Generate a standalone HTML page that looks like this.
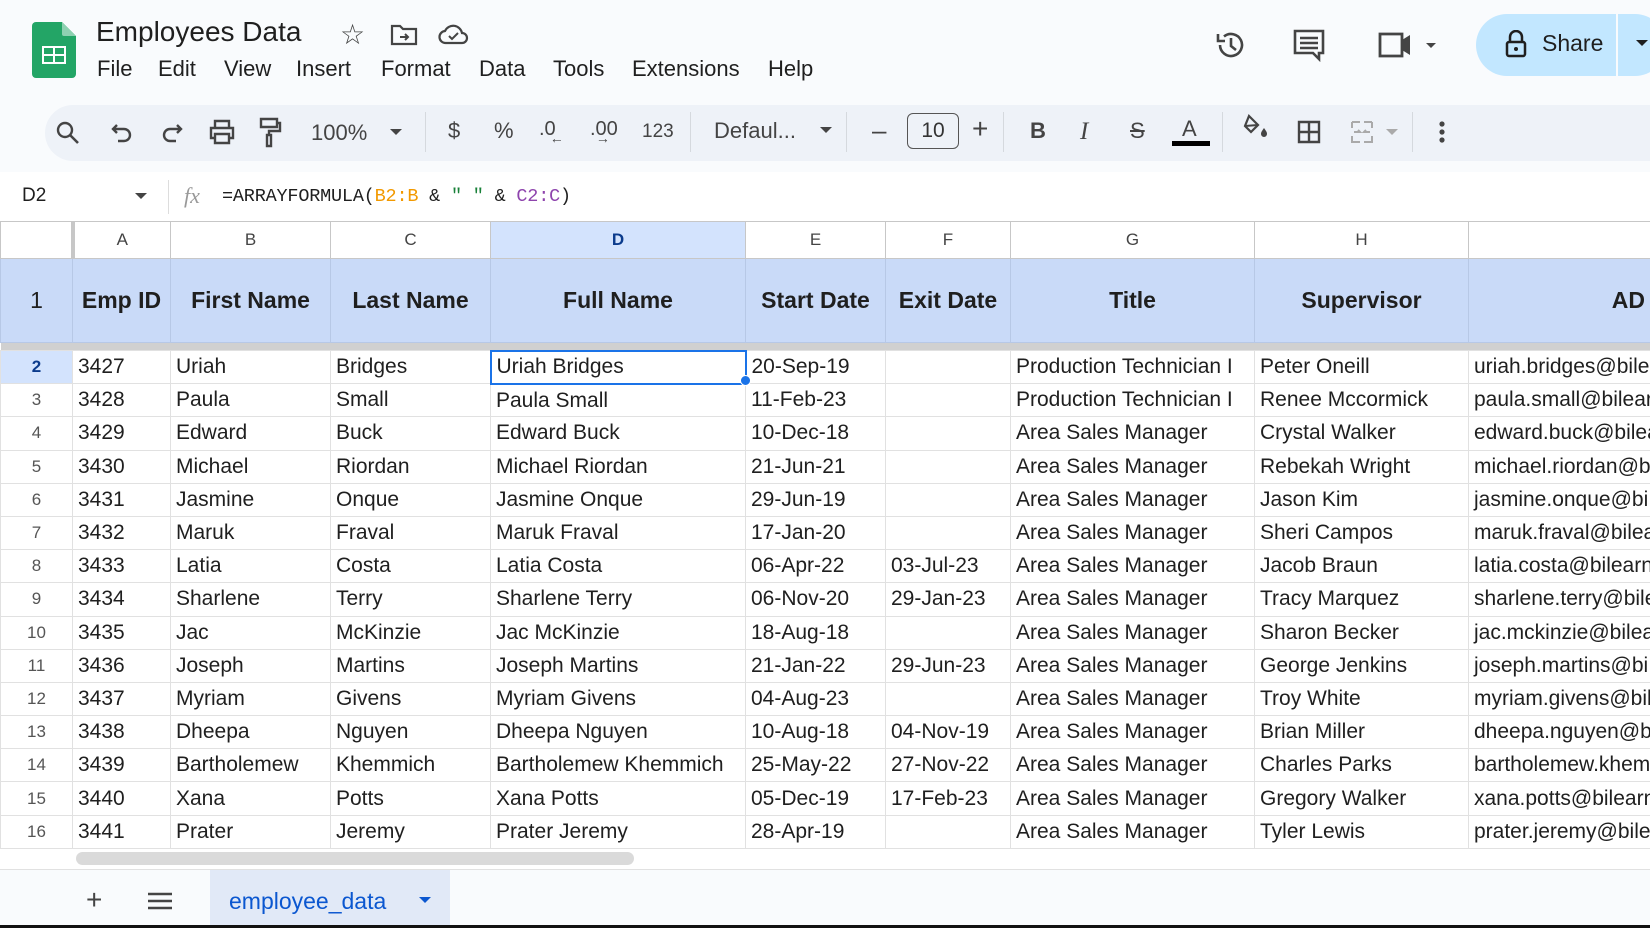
<!DOCTYPE html>
<html><head><meta charset="utf-8"><style>
*{box-sizing:border-box;margin:0;padding:0}
body{width:1650px;height:928px;overflow:hidden;background:#f9fbfd;font-family:"Liberation Sans",Arial,sans-serif;color:#1f1f1f;position:relative}
.abs{position:absolute}
.title{left:96px;top:16px;font-size:28px;color:#1f1f1f}
.menu{top:56px;font-size:22px;color:#1f1f1f}
.tb{left:45px;top:105px;width:1700px;height:56px;background:#eef2f8;border-radius:28px}
.ti{position:absolute;top:118px;font-size:22px;color:#444}
svg.i{position:absolute}
table{position:absolute;left:0;top:221px;width:1650px;border-collapse:collapse;table-layout:fixed;background:#fff}
td{border:1px solid #e1e1e1;font-size:21px;white-space:nowrap;overflow:hidden;padding:0 5px;height:33.2px;color:#1f1f1f}
tr.ch td{height:37px;text-align:center;font-size:17px;color:#444;background:#fff;border-color:#c7c7c7}
tr.h td{height:84px;background:#c9daf8;font-weight:bold;font-size:23px;text-align:center;color:#1f1f1f;border-color:#b7c8e6}
tr.s td{height:8px;background:#d0d0d0;border:none;padding:0}
td.rn{text-align:center;font-size:17px;color:#555;background:#fff;padding:0}
</style></head><body>
<svg class="i" style="left:32px;top:22px" width="44" height="56" viewBox="0 0 44 56"><path d="M4 0h26l14 14v38a4 4 0 0 1-4 4H4a4 4 0 0 1-4-4V4a4 4 0 0 1 4-4z" fill="#23a566"/><path d="M30 0l14 14H32a2 2 0 0 1-2-2z" fill="#8ed1b1"/><rect x="10" y="24" width="24" height="18" fill="#fff"/><rect x="12" y="26" width="9" height="6" fill="#23a566"/><rect x="23" y="26" width="9" height="6" fill="#23a566"/><rect x="12" y="34" width="9" height="6" fill="#23a566"/><rect x="23" y="34" width="9" height="6" fill="#23a566"/></svg>
<div class="abs title">Employees Data</div>
<div class="abs" style="left:340px;top:18px;font-size:28px;color:#444">☆</div>
<svg class="i" style="left:390px;top:24px" width="28" height="22" viewBox="0 0 28 22"><path d="M2 2h8l3 3h13v15H2z" fill="none" stroke="#444" stroke-width="2.2"/><path d="M10 13h8m-3-3l3 3-3 3" fill="none" stroke="#444" stroke-width="2"/></svg>
<svg class="i" style="left:438px;top:22px" width="32" height="24" viewBox="0 0 32 24"><path d="M8 21a6 6 0 0 1-1-12 9 9 0 0 1 17 2 5 5 0 0 1 0 10z" fill="none" stroke="#444" stroke-width="2.2"/><path d="M11 14l3 3 6-6" fill="none" stroke="#444" stroke-width="2"/></svg>
<div class="abs menu" style="left:97px">File</div><div class="abs menu" style="left:158px">Edit</div><div class="abs menu" style="left:224px">View</div><div class="abs menu" style="left:296px">Insert</div><div class="abs menu" style="left:381px">Format</div><div class="abs menu" style="left:479px">Data</div><div class="abs menu" style="left:553px">Tools</div><div class="abs menu" style="left:632px">Extensions</div><div class="abs menu" style="left:768px">Help</div>
<svg class="i" style="left:1214px;top:28px" width="34" height="34" viewBox="0 0 34 34"><path d="M6 17a11 11 0 1 0 4-8.5" fill="none" stroke="#444" stroke-width="2.6"/><path d="M4 6v7h7" fill="none" stroke="#444" stroke-width="2.6"/><path d="M17 10v8l5 4" fill="none" stroke="#444" stroke-width="2.6"/></svg>
<svg class="i" style="left:1292px;top:28px" width="34" height="34" viewBox="0 0 34 34"><path d="M3 3h28v22h-4v6l-6-6H3z" fill="none" stroke="#444" stroke-width="2.6"/><path d="M8 10h18M8 15h18M8 20h18" stroke="#444" stroke-width="2.4"/></svg>
<svg class="i" style="left:1376px;top:30px" width="60" height="30" viewBox="0 0 60 30"><path d="M4 4h22v22H4z" fill="none" stroke="#444" stroke-width="2.8"/><path d="M26 10l8-5v20l-8-5z" fill="#444"/><path d="M50 13h10l-5 5z" fill="#444"/></svg>
<div class="abs" style="left:1476px;top:14px;width:190px;height:62px;background:#c2e7ff;border-radius:31px"></div>
<div class="abs" style="left:1616px;top:14px;width:2px;height:62px;background:#f9fbfd"></div>
<svg class="i" style="left:1505px;top:30px" width="22" height="28" viewBox="0 0 22 28"><path d="M5 12V7a6 6 0 0 1 12 0v5" fill="none" stroke="#1f1f1f" stroke-width="2.5"/><rect x="2" y="12" width="18" height="14" rx="2" fill="none" stroke="#1f1f1f" stroke-width="2.5"/><circle cx="11" cy="19" r="2" fill="#1f1f1f"/></svg>
<div class="abs" style="left:1542px;top:30px;font-size:23px;color:#1f1f1f">Share</div>
<svg class="i" style="left:1636px;top:40px" width="12" height="8"><path d="M0 0h12L6 6z" fill="#1f1f1f"/></svg>
<div class="abs tb"></div>
<svg class="i" style="left:55px;top:120px" width="26" height="26" viewBox="0 0 26 26"><circle cx="10" cy="10" r="7" fill="none" stroke="#444" stroke-width="2.4"/><path d="M15 15l8 8" stroke="#444" stroke-width="2.6"/></svg>
<svg class="i" style="left:110px;top:122px" width="24" height="22" viewBox="0 0 24 22"><path d="M7 3L3 7l4 4M3 7h11a6 6 0 0 1 0 12H8" fill="none" stroke="#444" stroke-width="2.4"/></svg>
<svg class="i" style="left:160px;top:122px" width="24" height="22" viewBox="0 0 24 22"><path d="M17 3l4 4-4 4M21 7H10a6 6 0 0 0 0 12h6" fill="none" stroke="#444" stroke-width="2.4"/></svg>
<svg class="i" style="left:208px;top:118px" width="28" height="28" viewBox="0 0 28 28"><path d="M7 9V3h14v6M7 20H3V10h22v10h-4M7 16h14v9H7z" fill="none" stroke="#444" stroke-width="2.4"/></svg>
<svg class="i" style="left:258px;top:116px" width="24" height="32" viewBox="0 0 24 32"><path d="M3 3h16v8H3zM19 7h3v8H11v4M9 19h4v11H9z" fill="none" stroke="#444" stroke-width="2.4"/></svg>
<div class="ti" style="left:311px;top:120px">100%</div>
<svg class="i" style="left:390px;top:129px" width="12" height="8"><path d="M0 0h12L6 6z" fill="#444"/></svg>
<div class="abs" style="left:425px;top:112px;width:1px;height:40px;background:#d5d9de"></div>
<div class="ti" style="left:448px">$</div>
<div class="ti" style="left:494px">%</div>
<div class="ti" style="left:539px;font-size:20px">.0<span style="font-size:14px;position:relative;top:8px;left:-6px">←</span></div>
<div class="ti" style="left:590px;font-size:20px">.00<span style="font-size:14px;position:relative;top:8px;left:-22px">→</span></div>
<div class="ti" style="left:642px;font-size:19px;top:121px">123</div>
<div class="abs" style="left:690px;top:112px;width:1px;height:40px;background:#d5d9de"></div>
<div class="ti" style="left:714px">Defaul...</div>
<svg class="i" style="left:820px;top:127px" width="12" height="8"><path d="M0 0h12L6 6z" fill="#444"/></svg>
<div class="abs" style="left:846px;top:112px;width:1px;height:40px;background:#d5d9de"></div>
<div class="ti" style="left:872px;font-size:26px;top:115px">–</div>
<div class="abs" style="left:907px;top:113px;width:52px;height:36px;border:1.5px solid #555;border-radius:6px;font-size:21px;text-align:center;line-height:33px;color:#333">10</div>
<div class="ti" style="left:972px;font-size:28px;top:113px">+</div>
<div class="abs" style="left:1003px;top:112px;width:1px;height:40px;background:#d5d9de"></div>
<div class="ti" style="left:1030px;font-weight:bold">B</div>
<div class="ti" style="left:1080px;font-style:italic;font-family:'Liberation Serif',serif;font-size:25px">I</div>
<div class="ti" style="left:1130px;text-decoration:line-through">S</div>
<div class="ti" style="left:1182px;top:116px">A</div>
<div class="abs" style="left:1172px;top:141px;width:38px;height:5px;background:#000"></div>
<div class="abs" style="left:1222px;top:112px;width:1px;height:40px;background:#d5d9de"></div>
<svg class="i" style="left:1242px;top:114px" width="28" height="26" viewBox="0 0 28 26"><path d="M7 2l9 9-7 7-6-6z" fill="none" stroke="#444" stroke-width="2.2"/><path d="M3 12l13-1" stroke="#444" stroke-width="2"/><path d="M22 14c2 3 3 4 3 6a3 3 0 0 1-6 0c0-2 1-3 3-6z" fill="#444"/></svg>
<svg class="i" style="left:1297px;top:120px" width="24" height="24" viewBox="0 0 24 24"><path d="M2 2h20v20H2zM12 2v20M2 12h20" fill="none" stroke="#444" stroke-width="2.4"/></svg>
<svg class="i" style="left:1350px;top:120px" width="50" height="24" viewBox="0 0 50 24"><path d="M2 2h8M2 2v6M2 16v6h8M22 2h-8M22 16v6h-8M22 2v6M4 12h6l-2-2M20 12h-6l2-2" fill="none" stroke="#aaa" stroke-width="2"/><path d="M36 9h12l-6 6z" fill="#aaa"/></svg>
<div class="abs" style="left:1412px;top:112px;width:1px;height:40px;background:#d5d9de"></div>
<svg class="i" style="left:1438px;top:120px" width="8" height="26"><circle cx="4" cy="4" r="2.6" fill="#444"/><circle cx="4" cy="12" r="2.6" fill="#444"/><circle cx="4" cy="20" r="2.6" fill="#444"/></svg>
<div class="abs" style="left:0;top:172px;width:1650px;height:49px;background:#fff"></div>
<div class="abs" style="left:22px;top:185px;font-size:19px">D2</div>
<svg class="i" style="left:135px;top:193px" width="12" height="8"><path d="M0 0h12L6 6z" fill="#444"/></svg>
<div class="abs" style="left:168px;top:180px;width:1px;height:34px;background:#ddd"></div>
<div class="abs" style="left:184px;top:183px;font-size:22px;font-style:italic;font-family:'Liberation Serif',serif;color:#999">fx</div>
<div class="abs" style="left:222px;top:186px;font-size:18.5px;font-family:'Liberation Mono',monospace;letter-spacing:-0.2px">=ARRAYFORMULA(<span style="color:#f29900">B2:B</span> &amp; <span style="color:#188038">" "</span> &amp; <span style="color:#8e44ad">C2:C</span>)</div>
<table>
<colgroup><col style="width:72px"><col style="width:98px"><col style="width:160px"><col style="width:160px"><col style="width:255px"><col style="width:140px"><col style="width:125px"><col style="width:244px"><col style="width:214px"><col style="width:182px"></colgroup>
<tr class="ch"><td style="border-right:4px solid #c7c7c7"></td><td>A</td><td>B</td><td>C</td><td style="background:#d3e3fd;font-weight:bold;color:#0b3b8c">D</td><td>E</td><td>F</td><td>G</td><td>H</td><td></td></tr>
<tr class="h"><td class="rn" style="font-weight:normal">1</td><td>Emp ID</td><td>First Name</td><td>Last Name</td><td>Full Name</td><td>Start Date</td><td>Exit Date</td><td>Title</td><td>Supervisor</td><td style="text-align:right">AD</td></tr>
<tr class="s"><td colspan="10"></td></tr>
<tr><td class="rn" style="background:#d3e3fd;font-weight:bold;color:#0b3b8c">2</td><td>3427</td><td>Uriah</td><td>Bridges</td><td style="border:2px solid #1a73e8">Uriah Bridges</td><td>20-Sep-19</td><td></td><td>Production Technician I</td><td>Peter Oneill</td><td>uriah.bridges@bile</td></tr>
<tr><td class="rn">3</td><td>3428</td><td>Paula</td><td>Small</td><td>Paula Small</td><td>11-Feb-23</td><td></td><td>Production Technician I</td><td>Renee Mccormick</td><td>paula.small@bilear</td></tr>
<tr><td class="rn">4</td><td>3429</td><td>Edward</td><td>Buck</td><td>Edward Buck</td><td>10-Dec-18</td><td></td><td>Area Sales Manager</td><td>Crystal Walker</td><td>edward.buck@bilea</td></tr>
<tr><td class="rn">5</td><td>3430</td><td>Michael</td><td>Riordan</td><td>Michael Riordan</td><td>21-Jun-21</td><td></td><td>Area Sales Manager</td><td>Rebekah Wright</td><td>michael.riordan@b</td></tr>
<tr><td class="rn">6</td><td>3431</td><td>Jasmine</td><td>Onque</td><td>Jasmine Onque</td><td>29-Jun-19</td><td></td><td>Area Sales Manager</td><td>Jason Kim</td><td>jasmine.onque@bi</td></tr>
<tr><td class="rn">7</td><td>3432</td><td>Maruk</td><td>Fraval</td><td>Maruk Fraval</td><td>17-Jan-20</td><td></td><td>Area Sales Manager</td><td>Sheri Campos</td><td>maruk.fraval@bilea</td></tr>
<tr><td class="rn">8</td><td>3433</td><td>Latia</td><td>Costa</td><td>Latia Costa</td><td>06-Apr-22</td><td>03-Jul-23</td><td>Area Sales Manager</td><td>Jacob Braun</td><td>latia.costa@bilearn</td></tr>
<tr><td class="rn">9</td><td>3434</td><td>Sharlene</td><td>Terry</td><td>Sharlene Terry</td><td>06-Nov-20</td><td>29-Jan-23</td><td>Area Sales Manager</td><td>Tracy Marquez</td><td>sharlene.terry@bile</td></tr>
<tr><td class="rn">10</td><td>3435</td><td>Jac</td><td>McKinzie</td><td>Jac McKinzie</td><td>18-Aug-18</td><td></td><td>Area Sales Manager</td><td>Sharon Becker</td><td>jac.mckinzie@bilea</td></tr>
<tr><td class="rn">11</td><td>3436</td><td>Joseph</td><td>Martins</td><td>Joseph Martins</td><td>21-Jan-22</td><td>29-Jun-23</td><td>Area Sales Manager</td><td>George Jenkins</td><td>joseph.martins@bi</td></tr>
<tr><td class="rn">12</td><td>3437</td><td>Myriam</td><td>Givens</td><td>Myriam Givens</td><td>04-Aug-23</td><td></td><td>Area Sales Manager</td><td>Troy White</td><td>myriam.givens@bil</td></tr>
<tr><td class="rn">13</td><td>3438</td><td>Dheepa</td><td>Nguyen</td><td>Dheepa Nguyen</td><td>10-Aug-18</td><td>04-Nov-19</td><td>Area Sales Manager</td><td>Brian Miller</td><td>dheepa.nguyen@bi</td></tr>
<tr><td class="rn">14</td><td>3439</td><td>Bartholemew</td><td>Khemmich</td><td>Bartholemew Khemmich</td><td>25-May-22</td><td>27-Nov-22</td><td>Area Sales Manager</td><td>Charles Parks</td><td>bartholemew.khem</td></tr>
<tr><td class="rn">15</td><td>3440</td><td>Xana</td><td>Potts</td><td>Xana Potts</td><td>05-Dec-19</td><td>17-Feb-23</td><td>Area Sales Manager</td><td>Gregory Walker</td><td>xana.potts@bilearn</td></tr>
<tr><td class="rn">16</td><td>3441</td><td>Prater</td><td>Jeremy</td><td>Prater Jeremy</td><td>28-Apr-19</td><td></td><td>Area Sales Manager</td><td>Tyler Lewis</td><td>prater.jeremy@bile</td></tr>
</table>
<div class="abs" style="left:740px;top:375px;width:11px;height:11px;border-radius:50%;background:#1a73e8;border:1.5px solid #fff"></div>
<div class="abs" style="left:0;top:848px;width:1650px;height:21px;background:#fff;border-top:1px solid #e1e1e1"></div>
<div class="abs" style="left:76px;top:852px;width:558px;height:13px;background:#dadada;border-radius:7px"></div>
<div class="abs" style="left:0;top:869px;width:1650px;height:57px;background:#f9fbfd;border-top:1px solid #e1e1e1"></div>
<div class="abs" style="left:86px;top:884px;font-size:28px;color:#444">+</div>
<svg class="i" style="left:148px;top:892px" width="24" height="18"><path d="M0 2h24M0 9h24M0 16h24" stroke="#444" stroke-width="2.4"/></svg>
<div class="abs" style="left:210px;top:870px;width:240px;height:56px;background:#e1e9f7"></div>
<div class="abs" style="left:229px;top:888px;font-size:23px;color:#0b57d0">employee_data</div>
<svg class="i" style="left:419px;top:897px" width="12" height="8"><path d="M0 0h12L6 6z" fill="#0b57d0"/></svg>
<div class="abs" style="left:0;top:925px;width:1650px;height:3px;background:#111"></div>
</body></html>
